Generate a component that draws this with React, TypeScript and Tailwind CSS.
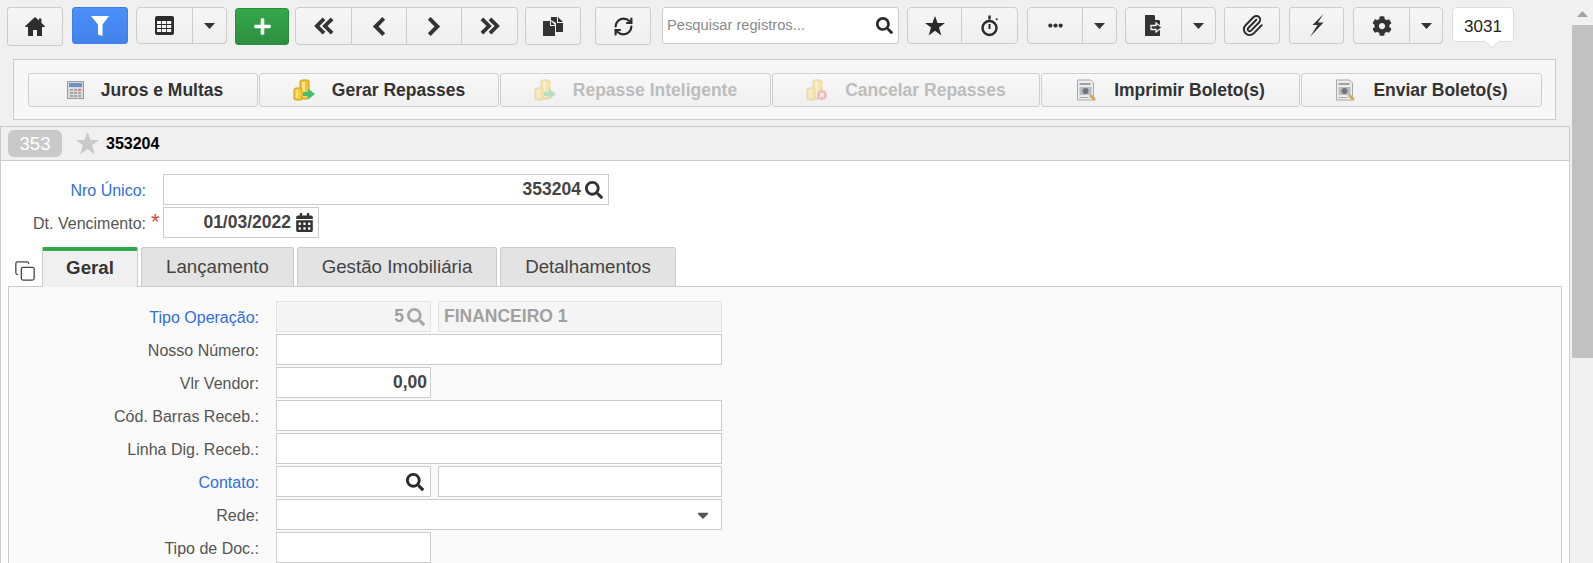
import React from "react";
import { FaPlus, FaSearch, FaEllipsisH, FaCog, FaCalendarAlt, FaCaretDown } from "react-icons/fa";
import { RefreshCw, Paperclip, Copy } from "lucide-react";

const ic = "#333333";
const btn = "flex items-center justify-center bg-linear-to-b from-[#f6f6f6] to-[#efefef] border border-[#cccccc] text-[#333333]";
const seg = "flex items-center justify-center h-full";

function Caret() {
  return <svg width="11" height="6" viewBox="0 0 11 6"><path d="M0 0h11L5.5 6z" fill={ic} /></svg>;
}
function Star({ size = 20, color = "#2a2a2a" }: { size?: number; color?: string }) {
  return <svg width={size} height={size} viewBox="0 0 20 20"><path d="M10 0l2.6 7H20l-6 4.6 2.300 7.900L10 14.800l-6.300 4.700L6 11.600 0 7h7.400z" fill={color} /></svg>;
}
function Home() {
  return <svg width="20" height="19" viewBox="0 0 20 19"><path d="M10 0l4 3.600V1.500h2.400v4.300L20 9.200l-.8.9H17V19h-5v-6H8v6H3v-8.900H.8L0 9.200z" fill="#2e2e2e" /></svg>;
}
function Chev({ dir, double }: { dir: "l" | "r"; double?: boolean }) {
  if (double) {
    return (
      <svg width="22" height="18" viewBox="0 0 24 20" fill="none" stroke="#333" strokeWidth="4.2">
        {dir === "l" ? <><path d="M12 2L4 10l8 8" /><path d="M21 2l-8 8 8 8" /></> : <><path d="M3 2l8 8-8 8" /><path d="M12 2l8 8-8 8" /></>}
      </svg>
    );
  }
  return (
    <svg width="14" height="19" viewBox="0 0 14 20" fill="none" stroke="#333" strokeWidth="4.2">
      <path d={dir === "l" ? "M12 1.500L3.500 10l8.500 8.500" : "M2 1.500L10.500 10 2 18.500"} />
    </svg>
  );
}
function Filter() {
  return <svg width="18" height="20" viewBox="0 0 18 20"><path d="M0 0h18l-6.500 8.500V20L7 18.500V8.500z" fill="#ffffff" /></svg>;
}
function TableIco() {
  return (
    <svg width="19" height="19" viewBox="0 0 19 19">
      <rect x="0" y="0" width="19" height="19" rx="2" fill="#2c2c2c" />
      {[5, 9, 13].map((y) => [2, 7, 12].map((x) => <rect key={x + "-" + y} x={x} y={y} width="4.2" height="3" fill="#f4f4f4" />))}
    </svg>
  );
}
function Docs() {
  return (
    <svg width="20" height="19" viewBox="0 0 20 19">
      <path d="M8 0h6v6h6v9h-7V6L8 3z" fill="#333" />
      <path d="M15 0l5 5h-5z" fill="#333" />
      <path d="M0 4h7v5h5v10H0z" fill="#333" />
      <path d="M8 4l4 4H8z" fill="#333" />
    </svg>
  );
}
function Watch() {
  return (
    <svg width="20" height="22" viewBox="0 0 20 22" fill="none" stroke="#2a2a2a" strokeWidth="2.4">
      <circle cx="9.500" cy="13" r="7" />
      <path d="M9.500 9v5" strokeWidth="2" />
      <path d="M9.500 0.500v4" strokeWidth="2.4" />
      <path d="M16 3.500l1.500 1.500" strokeWidth="1.6" />
    </svg>
  );
}
function ExportIco() {
  return (
    <svg width="18" height="21" viewBox="0 0 18 21">
      <path d="M0 0h9l6 6v15H0z" fill="#333" />
      <path d="M10 0l5 5h-5z" fill="#f4f4f4" />
      <path d="M6 10.500h5V8l6 4.500-6 4.500v-2.500H6z" fill="#333" stroke="#f4f4f4" strokeWidth="1.3" />
    </svg>
  );
}
function Bolt() {
  return <svg width="15" height="23" viewBox="0 0 15 23"><path d="M14.500 0L3.500 11h5L1 23 14.500 8.500H9z" fill="#333" /></svg>;
}
function Calculator() {
  return (
    <svg width="17" height="18" viewBox="0 0 17 18">
      <rect x="0.500" y="0.500" width="16" height="17" fill="#dadada" stroke="#9a9a9a" />
      <rect x="2" y="2" width="13" height="4" fill="#6b93c9" />
      {[8, 11, 14].map((y) => [3, 7, 11].map((x) => <rect key={x + "-" + y} x={x} y={y} width="3" height="2" fill={y === 8 && x === 11 ? "#d98080" : "#a8a8a8"} />))}
    </svg>
  );
}
function Coins({ badge, faded }: { badge: "green" | "red"; faded?: boolean }) {
  return (
    <svg width="22" height="23" viewBox="0 0 22 23" className={faded ? "opacity-35" : ""}>
      <rect x="7" y="1" width="9" height="19" rx="2" fill="#f4c430" stroke="#d49a10" />
      <rect x="9" y="3" width="3" height="15" fill="#fbe58a" />
      <rect x="1" y="9" width="8" height="12" rx="2" fill="#f6cd3d" stroke="#d49a10" />
      <rect x="3" y="11" width="2" height="8" fill="#fbe58a" />
      {badge === "green" ? (
        <path d="M10 13h5v-3.500l7 5.500-7 5.500V17h-5z" fill="#45bd6a" />
      ) : (
        <>
          <circle cx="16" cy="16" r="5" fill="#e8585f" />
          <path d="M14 14l4 4m0-4l-4 4" stroke="#fff" strokeWidth="1.2" />
        </>
      )}
    </svg>
  );
}
function Boleto() {
  return (
    <svg width="21" height="23" viewBox="0 0 21 23">
      <path d="M1.500 1h13l3 3v17h-16z" fill="#ececec" stroke="#a8a8a8" />
      <rect x="3.500" y="4" width="11" height="2" fill="#9aa3ad" />
      <rect x="3.500" y="8" width="12" height="8" fill="#b8bcc0" />
      <circle cx="9.500" cy="12" r="3" fill="#70757a" />
      <rect x="3.500" y="18" width="9" height="1" fill="#aaa" />
      <path d="M13 17l2-2 5 5-2 2z" fill="#d9a860" />
    </svg>
  );
}

function ActionBtn({ w, icon, label, off }: { w: string; icon: React.ReactNode; label: string; off?: boolean }) {
  return (
    <div className={`${w} h-[34px] flex items-center justify-center gap-[17px] rounded-[3px] border border-[#cfcfcf] bg-linear-to-b from-[#f8f8f8] to-[#f0f0f0] text-[17.5px] font-bold ${off ? "text-[#bdbdbd]" : "text-[#333333]"}`}>
      {icon}
      <span>{label}</span>
    </div>
  );
}

function Field({ w, right, children, off, className }: { w: string; right?: boolean; children?: React.ReactNode; off?: boolean; className?: string }) {
  return (
    <div className={`${w} h-[31px] flex items-center gap-[3px] border text-[17.5px] font-bold ${right ? "justify-end" : ""} ${off ? "border-[#e2e2e2] bg-[#f5f5f5] text-[#a0a0a0]" : "border-[#cccccc] bg-white text-[#444444]"} ${className ?? ""}`}>
      {children}
    </div>
  );
}

function Row({ label, blue, children }: { label: string; blue?: boolean; children: React.ReactNode }) {
  return (
    <div className="flex items-start h-[33px]">
      <div className={`w-[250px] h-[31px] pt-[3px] flex items-center justify-end text-[16px] ${blue ? "text-[#2f6fe0]" : "text-[#555555]"}`}>{label}</div>
      <div className="ml-[17px] flex gap-[7px]">{children}</div>
    </div>
  );
}

function Tab({ w, active, children }: { w: string; active?: boolean; children: React.ReactNode }) {
  return (
    <div className={`${w} h-[40px] flex items-center justify-center text-[18.7px] rounded-t-[2px] border-x border-[#cccccc] ${active ? "border-t-[4px] border-t-[#2fa84a] bg-[#f0f0f0] font-bold text-[#333333] pb-[2px]" : "border-t border-t-[#cccccc] border-b bg-[#e3e3e3] text-[#444444]"}`}>
      {children}
    </div>
  );
}

export default function App() {
  return (
    <div className="w-[1593px] h-[563px] overflow-hidden flex bg-[#f0f0f0] font-['Liberation_Sans',Arial,sans-serif]">
      <div className="w-[1572px] shrink-0">
        <div className="h-[59px] pl-[7px] pt-[7px] flex items-start">
          <div className={`${btn} w-[56px] h-[39px] rounded-[3px]`}><Home /></div>
          <div className="ml-[9px] w-[56px] h-[37px] flex items-center justify-center rounded-[3px] border border-[#3f7fe6] bg-linear-to-b from-[#4c90fb] to-[#4281ea]"><Filter /></div>
          <div className={`${btn} ml-[8px] w-[91px] h-[37px] rounded-[4px]`}>
            <div className={`${seg} w-[56px] border-r border-[#cccccc]`}><TableIco /></div>
            <div className={`${seg} flex-1`}><Caret /></div>
          </div>
          <div className="ml-[8px] mt-[1px] w-[54px] h-[37px] flex items-center justify-center rounded-[3px] border border-[#2b8c3e] bg-linear-to-b from-[#36a84a] to-[#2c8f3f] text-white"><FaPlus size={19} /></div>
          <div className={`${btn} ml-[6px] w-[223px] h-[38px] rounded-[4px]`}>
            <div className={`${seg} w-[56px] border-r border-[#cccccc]`}><Chev dir="l" double /></div>
            <div className={`${seg} w-[55px] border-r border-[#cccccc]`}><Chev dir="l" /></div>
            <div className={`${seg} w-[55px] border-r border-[#cccccc]`}><Chev dir="r" /></div>
            <div className={`${seg} flex-1`}><Chev dir="r" double /></div>
          </div>
          <div className={`${btn} ml-[7px] w-[56px] h-[38px] rounded-[3px]`}><Docs /></div>
          <div className={`${btn} ml-[14px] w-[56px] h-[38px] rounded-[3px]`}><RefreshCw size={21} strokeWidth={2.5} color="#2a2a2a" /></div>
          <div className="ml-[11px] w-[237px] h-[37px] flex items-center justify-between pl-[4px] pr-[5px] rounded-[3px] border border-[#cccccc] bg-white">
            <span className="text-[14.7px] text-[#8a8a8a]">Pesquisar registros...</span>
            <FaSearch size={17} color="#2a2a2a" />
          </div>
          <div className={`${btn} ml-[8px] w-[111px] h-[37px] rounded-[4px]`}>
            <div className={`${seg} w-[54px] border-r border-[#cccccc]`}><Star /></div>
            <div className={`${seg} flex-1`}><Watch /></div>
          </div>
          <div className={`${btn} ml-[9px] w-[90px] h-[37px] rounded-[4px]`}>
            <div className={`${seg} w-[55px] border-r border-[#cccccc]`}><FaEllipsisH size={15} /></div>
            <div className={`${seg} flex-1`}><Caret /></div>
          </div>
          <div className={`${btn} ml-[8px] w-[91px] h-[37px] rounded-[4px]`}>
            <div className={`${seg} w-[56px] border-r border-[#cccccc]`}><ExportIco /></div>
            <div className={`${seg} flex-1`}><Caret /></div>
          </div>
          <div className={`${btn} ml-[8px] w-[56px] h-[37px] rounded-[3px]`}><Paperclip size={23} strokeWidth={2} color="#2a2a2a" /></div>
          <div className={`${btn} ml-[9px] w-[55px] h-[37px] rounded-[3px]`}><Bolt /></div>
          <div className={`${btn} ml-[9px] w-[90px] h-[37px] rounded-[4px]`}>
            <div className={`${seg} w-[56px] border-r border-[#cccccc]`}><FaCog size={20} /></div>
            <div className={`${seg} flex-1`}><Caret /></div>
          </div>
          <div className="relative ml-[9px] w-[62px] h-[35px] flex items-center justify-center rounded-[4px] border border-[#dddddd] bg-white text-[17px] text-[#222222] pt-[4px]">
            3031
            <div className="absolute left-[34px] top-[29px] w-[10px] h-[10px] rotate-45 bg-white border-r border-b border-[#dddddd]" />
          </div>
        </div>

        <div className="ml-[13px] w-[1543px] h-[61px] pl-[14px] pt-[13px] flex gap-[1px] border border-[#cccccc] bg-[#f7f7f7]">
          <ActionBtn w="w-[230px] pl-[4px]" icon={<Calculator />} label="Juros e Multas" />
          <ActionBtn w="w-[240px]" icon={<Coins badge="green" />} label="Gerar Repasses" />
          <ActionBtn w="w-[271px]" off icon={<Coins badge="green" faded />} label="Repasse Inteligente" />
          <ActionBtn w="w-[268px]" off icon={<Coins badge="red" faded />} label="Cancelar Repasses" />
          <ActionBtn w="w-[259px]" icon={<Boleto />} label="Imprimir Boleto(s)" />
          <ActionBtn w="w-[241px]" icon={<Boleto />} label="Enviar Boleto(s)" />
        </div>

        <div className="mt-[6px] w-[1570px] border-x border-t border-[#cccccc] bg-white">
          <div className="h-[34px] flex items-center pl-[7px] border-b border-[#cccccc] bg-[#f0f0f0]">
            <div className="w-[54px] h-[27px] flex items-center justify-center rounded-[6px] bg-[#c9c9c9] text-white text-[18.5px]">353</div>
            <div className="ml-[14px]"><Star size={23} color="#c9c9c9" /></div>
            <span className="ml-[7px] text-[16px] font-bold text-black">353204</span>
          </div>
          <div className="pt-[13px] bg-white">
            <div className="flex h-[33px] items-start">
              <div className="w-[145px] h-[31px] pt-[3px] flex items-center justify-end text-[16px] text-[#2f6fe0]">Nro Único:</div>
              <div className="ml-[17px]">
                <Field w="w-[446px]" right className="pr-[5px]"><span className="mr-[1px]">353204</span><FaSearch size={18} color="#333333" /></Field>
              </div>
            </div>
            <div className="flex h-[40px] items-start">
              <div className="w-[145px] h-[31px] pt-[3px] flex items-center justify-end text-[16px] text-[#555555]">Dt. Vencimento:</div>
              <div className="w-[17px] pl-[5px] text-[22px] leading-[30px] text-[#d9443a]">*</div>
              <Field w="w-[156px]" right className="pr-[4px]"><span className="mr-[1px]">01/03/2022</span><FaCalendarAlt size={19} color="#333333" /></Field>
            </div>
            <div className="flex items-end pl-[13px] h-[39px]">
              <div className="w-[28px] h-[30px] flex items-center"><Copy size={22} strokeWidth={1.4} color="#444444" /></div>
              <div className="flex gap-[3px] -mb-px">
                <Tab w="w-[96px]" active>Geral</Tab>
                <Tab w="w-[153px]">Lançamento</Tab>
                <Tab w="w-[200px]">Gestão Imobiliária</Tab>
                <Tab w="w-[176px]">Detalhamentos</Tab>
              </div>
            </div>
            <div className="ml-[7px] w-[1554px] pt-[14px] border-x border-t border-[#cccccc] bg-[#fafafa]">
              <Row label="Tipo Operação:" blue>
                <Field w="w-[155px]" right off className="pr-[5px]">5<FaSearch size={18} color="#a8a8a8" /></Field>
                <Field w="w-[284px]" off className="pl-[5px]">FINANCEIRO 1</Field>
              </Row>
              <Row label="Nosso Número:"><Field w="w-[446px]" /></Row>
              <Row label="Vlr Vendor:"><Field w="w-[155px]" right className="pr-[3px]">0,00</Field></Row>
              <Row label="Cód. Barras Receb.:"><Field w="w-[446px]" /></Row>
              <Row label="Linha Dig. Receb.:"><Field w="w-[446px]" /></Row>
              <Row label="Contato:" blue>
                <Field w="w-[155px]" right className="pr-[6px]"><FaSearch size={18} color="#2a2a2a" /></Field>
                <Field w="w-[284px]" />
              </Row>
              <Row label="Rede:">
                <Field w="w-[446px]" right className="pr-[9px]"><FaCaretDown size={18} color="#555555" /></Field>
              </Row>
              <Row label="Tipo de Doc.:"><Field w="w-[155px]" /></Row>
            </div>
          </div>
        </div>
      </div>

      <div className="w-[21px] shrink-0 flex flex-col bg-[#f1f1f1]">
        <div className="h-[25px] flex items-center justify-center pt-[2px]">
          <svg width="11" height="6" viewBox="0 0 11 6"><path d="M5.5 0L11 6H0z" fill="#a3a3a3" /></svg>
        </div>
        <div className="h-[333px] bg-[#c1c1c1]" />
      </div>
    </div>
  );
}
